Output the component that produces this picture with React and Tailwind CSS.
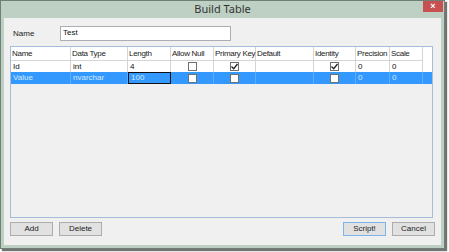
import React from 'react'

const cols = [
  { name: 'Name', w: 60 },
  { name: 'Data Type', w: 57 },
  { name: 'Length', w: 43 },
  { name: 'Allow Null', w: 43 },
  { name: 'Primary Key', w: 42 },
  { name: 'Default', w: 58 },
  { name: 'Identity', w: 42 },
  { name: 'Precision', w: 34 },
  { name: 'Scale', w: 33 },
]

const rows = [
  ['Id', 'int', '4', false, true, '', true, '0', '0'],
  ['Value', 'nvarchar', '100', false, false, '', false, '0', '0'],
]

const Check = ({ checked }) => (
  <span className="flex h-[9px] w-[9px] items-center justify-center border border-[#707070] bg-white">
    {checked && (
      <svg width="7" height="7" viewBox="0 0 7 7">
        <path d="M0.5 3.5 L2.7 5.7 L6.5 1" fill="none" stroke="#222" strokeWidth="1.3" />
      </svg>
    )}
  </span>
)

const Button = ({ children, focus }) => (
  <button
    type="button"
    className={`flex h-[14px] w-[43px] items-center justify-center border bg-[#e1e1e1] text-[8px] leading-none text-[#222] ${
      focus ? 'border-[#7eb4ea]' : 'border-[#adadad]'
    }`}
  >
    {children}
  </button>
)

export default function App() {
  return (
    <div className="h-[252px] w-[449px] bg-white" style={{ fontFamily: '"Liberation Sans", Arial, sans-serif' }}>
      <div className="relative flex h-[249px] w-[445px] flex-col border border-[#6f7f74] bg-[#bdd0c3] shadow-[2px_2px_1px_rgba(0,0,0,0.55)]">
        {/* title bar */}
        <div className="flex h-[17px] items-center justify-center text-[11px] text-[#333]" style={{ fontFamily: '"Noto Sans", sans-serif' }}>
          Build Table
        </div>
        <div className="absolute right-[1px] top-0 flex h-[11px] w-[20px] items-center justify-center bg-[#c75050] text-[9px] font-bold leading-none text-white">
          ×
        </div>

        {/* client */}
        <div className="mx-[3px] mb-[3px] flex flex-1 flex-col bg-[#f0f0f0] px-[6px]">
          <div className="mt-[8px] flex h-[15px] items-center">
            <span className="ml-[3px] w-[47px] text-[8px] text-[#222]">Name</span>
            <div className="flex h-[15px] w-[171px] items-start border border-[#abadb3] bg-white px-[2px] text-[8px] leading-[11px] text-[#111]">
              Test
            </div>
          </div>

          {/* grid */}
          <div className="mt-[5px] h-[172px] w-[423px] border border-[#a5bdd8] bg-[#f0f0f0]">
            <div className="flex h-[13px] bg-white text-[8px] tracking-[-0.3px] text-[#222]">
              {cols.map((c) => (
                <div
                  key={c.name}
                  className="flex items-center whitespace-nowrap border-r border-[#d5d5d5] px-[1px]"
                  style={{ width: c.w }}
                >
                  {c.name}
                </div>
              ))}
            </div>
            {rows.map((r, ri) => {
              const sel = ri === 1
              return (
                <div
                  key={ri}
                  className={`flex h-[12px] text-[8px] ${sel ? 'bg-[#3399ff] text-[#d4e9ff]' : 'bg-white text-[#111]'}`}
                >
                  {r.map((v, ci) => {
                    const focus = sel && ci === 2
                    return (
                      <div
                        key={ci}
                        className={`flex items-center whitespace-nowrap px-[2px] ${
                          focus ? 'border border-[#111]' : sel ? 'border-r border-[#5aaeff]' : 'border-r border-t border-[#d5d5d5]'
                        } ${typeof v === 'boolean' ? 'justify-center' : ''}`}
                        style={{ width: cols[ci].w }}
                      >
                        {typeof v === 'boolean' ? <Check checked={v} /> : v}
                      </div>
                    )
                  })}
                </div>
              )
            })}
          </div>

          {/* buttons */}
          <div className="mt-[4px] flex gap-[6px]">
            <Button>Add</Button>
            <Button>Delete</Button>
            <div className="flex-1" />
            <Button focus>Script!</Button>
            <Button>Cancel</Button>
          </div>
        </div>
      </div>
    </div>
  )
}
